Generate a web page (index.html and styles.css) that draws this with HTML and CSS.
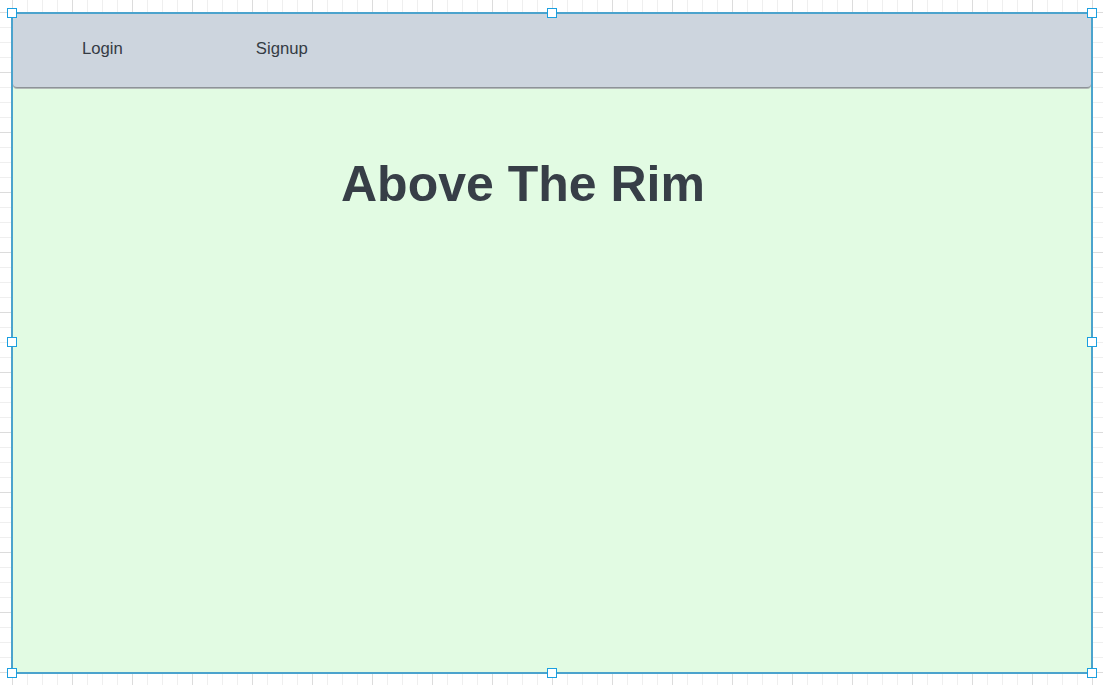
FILE: index.html
```html
<!DOCTYPE html>
<html>
<head>
<meta charset="utf-8">
<link rel="stylesheet" href="styles.css">
</head>
<body>
<div class="canvas">
  <div class="frame">
    <nav class="nav">
      <a class="nav-link login">Login</a>
      <a class="nav-link signup">Signup</a>
    </nav>
    <main class="main">
      <h1 class="title">Above The Rim</h1>
    </main>
    <span class="handle h-tl"></span>
    <span class="handle h-tc"></span>
    <span class="handle h-tr"></span>
    <span class="handle h-ml"></span>
    <span class="handle h-mr"></span>
    <span class="handle h-bl"></span>
    <span class="handle h-bc"></span>
    <span class="handle h-br"></span>
  </div>
</div>
</body>
</html>
```
FILE: styles.css
```css
html, body {
  margin: 0;
  padding: 0;
}
body {
  width: 1103px;
  height: 685px;
  overflow: hidden;
  font-family: "Liberation Sans", Arial, sans-serif;
  background-color: #ffffff;
  background-image:
    linear-gradient(to right, #dcdcdc 1px, transparent 1px),
    linear-gradient(to bottom, #dcdcdc 1px, transparent 1px),
    linear-gradient(to right, #efefef 1px, transparent 1px),
    linear-gradient(to bottom, #efefef 1px, transparent 1px);
  background-size: 60px 60px, 60px 60px, 15px 15px, 15px 15px;
  background-position: 12px 12px, 12px 12px, 12px 12px, 12px 12px;
}
.canvas {
  padding: 12px 0 0 11px;
}
.frame {
  position: relative;
  width: 1078px;
  height: 658px;
  border: 2px solid #4ba3cd;
  background: #e2fbe3;
  display: flex;
  flex-direction: column;
}
.nav {
  height: 74px;
  box-sizing: border-box;
  background: #cdd5de;
  border-bottom: 1px solid #8d9398;
  border-radius: 0 0 4px 4px;
  box-shadow: 0 1px 0 #b4bab8;
  display: flex;
  align-items: center;
  padding-bottom: 4px;
}
.nav-link {
  font-size: 16.7px;
  color: #343b44;
  text-decoration: none;
}
.login {
  margin-left: 69px;
}
.signup {
  margin-left: 133px;
}
.main {
  flex: 1;
  padding: 68px 0 0 328px;
}
.title {
  margin: 0;
  font-size: 50px;
  font-weight: bold;
  line-height: 57px;
  color: #373e47;
}
.handle {
  position: absolute;
  width: 8px;
  height: 8px;
  background: #ffffff;
  border: 1px solid #1a9fe0;
}
.h-tl { left: -6px; top: -6px; }
.h-tc { left: 534px; top: -6px; }
.h-tr { right: -6px; top: -6px; }
.h-ml { left: -6px; top: 323px; }
.h-mr { right: -6px; top: 323px; }
.h-bl { left: -6px; bottom: -6px; }
.h-bc { left: 534px; bottom: -6px; }
.h-br { right: -6px; bottom: -6px; }
```
